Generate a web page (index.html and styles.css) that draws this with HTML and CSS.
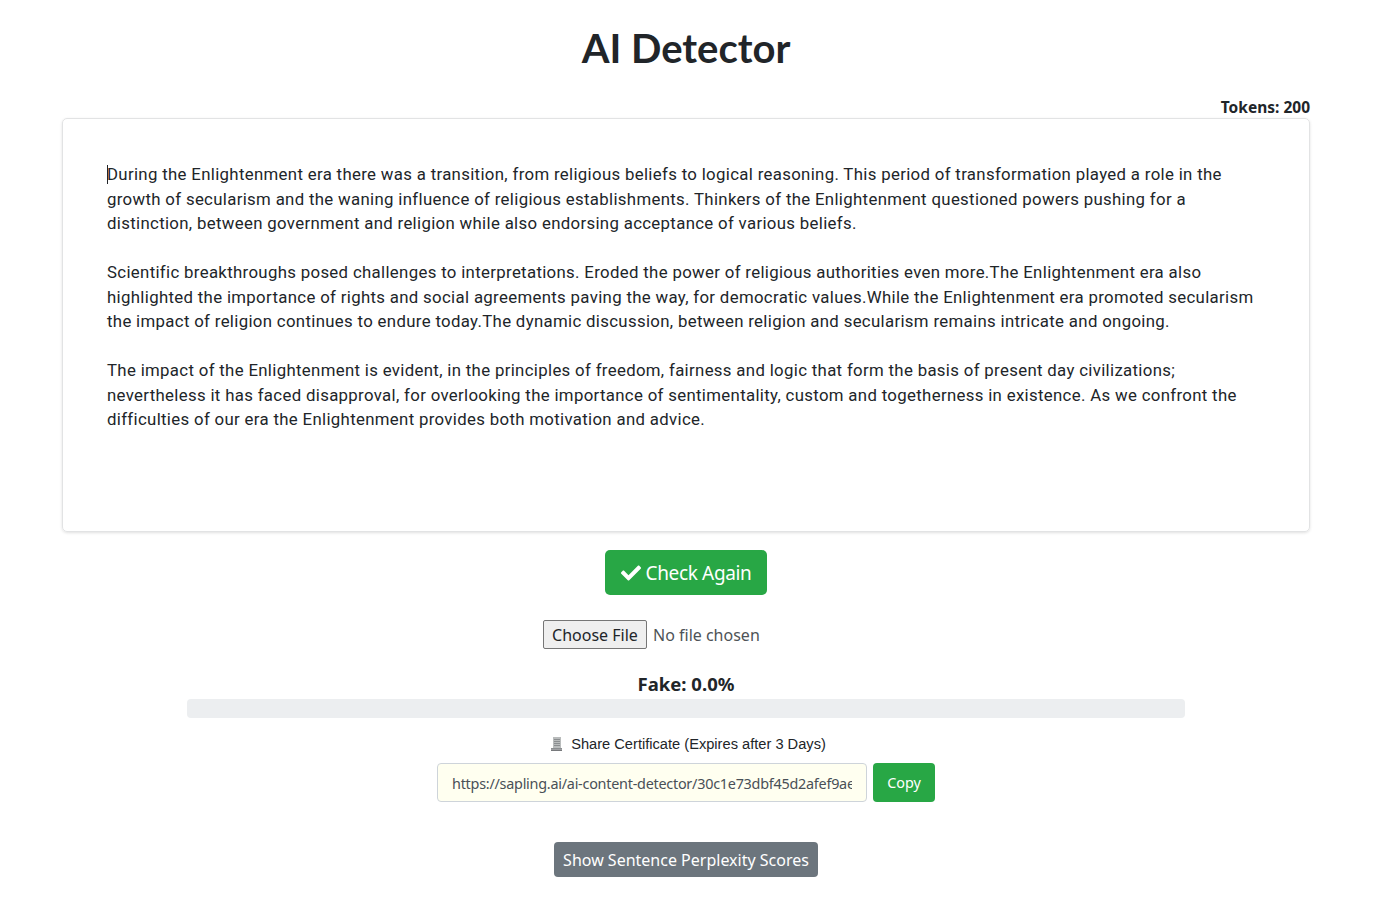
FILE: index.html
```html
<!DOCTYPE html>
<html lang="en">
<head>
    <meta charset="UTF-8">
    <meta name="viewport" content="width=device-width, initial-scale=1.0">
    <title>AI Detector</title>
    <link rel="stylesheet" href="styles.css">
</head>
<body>
    <div class="container">
        <h1 class="title">AI Detector</h1>
        <div class="tokens">Tokens: 200</div>
        <div class="editor">
            <p><span class="caret"></span>During the Enlightenment era there was a transition, from religious beliefs to logical reasoning. This period of transformation played a role in the growth of secularism and the waning influence of religious establishments. Thinkers of the Enlightenment questioned powers pushing for a distinction, between government and religion while also endorsing acceptance of various beliefs.</p>
            <p>Scientific breakthroughs posed challenges to interpretations. Eroded the power of religious authorities even more.The Enlightenment era also highlighted the importance of rights and social agreements paving the way, for democratic values.While the Enlightenment era promoted secularism the impact of religion continues to endure today.The dynamic discussion, between religion and secularism remains intricate and ongoing.</p>
            <p>The impact of the Enlightenment is evident, in the principles of freedom, fairness and logic that form the basis of present day civilizations; nevertheless it has faced disapproval, for overlooking the importance of sentimentality, custom and togetherness in existence. As we confront the difficulties of our era the Enlightenment provides both motivation and advice.</p>
        </div>
        <button class="btn btn-check" type="button">
            <svg class="check-icon" viewBox="0 0 512 512"><path fill="currentColor" d="M173.9 439.4L7.5 273c-10-10-10-26.200 0-36.200l36.200-36.200c10-10 26.200-10 36.200 0L192 312.700 432.100 72.600c10-10 26.200-10 36.200 0l36.200 36.200c10 10 10 26.200 0 36.200L210.100 439.400c-10 10-26.200 10-36.200 0z"/></svg>
            Check Again
        </button>
        <div class="file-row"><input type="file" class="file-input"></div>
        <div class="score-label">Fake: 0.0%</div>
        <div class="progress"></div>
        <div class="share-label">
            <svg class="receipt-icon" viewBox="0 0 12 14"><path fill="#b9bcbc" d="M2 0h8v11H2z"/><path fill="#8b8e90" d="M3 2h6v1H3zM3 4h6v1H3zM3 6h6v1H3zM3 8h6v1H3zM0 11h11v1.500H0z"/><path fill="#77797c" d="M0 12.500h11V14H0z"/></svg>
            <span>Share Certificate (Expires after 3 Days)</span>
        </div>
        <div class="share-row">
            <input type="text" class="share-input" readonly value="https://sapling.ai/ai-content-detector/30c1e73dbf45d2afef9ae81c7d2b64a0">
            <button class="btn btn-copy" type="button">Copy</button>
        </div>
        <button class="btn btn-scores" type="button">Show Sentence Perplexity Scores</button>
    </div>
</body>
</html>
```

FILE: styles.css
```css
body {
    margin: 0;
    padding: 0 7px 0 0;
    background: #fff;
    color: #212529;
    font-family: 'Open Sans', sans-serif;
}
.container {
    display: flex;
    flex-direction: column;
    align-items: center;
    padding: 0 62px;
}
.title {
    margin: 23px 0 0;
    font-family: 'Lato', sans-serif;
    font-size: 40px;
    line-height: 50px;
    font-weight: 700;
    color: #212529;
}
.tokens {
    align-self: flex-end;
    margin-top: 24px;
    font-size: 15.500px;
    line-height: 20px;
    font-weight: 700;
    font-family: 'Noto Sans', sans-serif;
}
.editor {
    box-sizing: border-box;
    width: 100%;
    height: 414px;
    margin-top: 1px;
    padding: 43px 44px;
    border: 1px solid #e2e3e4;
    border-radius: 5px;
    box-shadow: 0 1px 3px rgba(0, 0, 0, 0.12);
    font-family: 'Roboto', sans-serif;
    font-size: 16.800px;
    line-height: 24.500px;
    letter-spacing: 0.33px;
}
.editor p {
    margin: 0 0 24.500px;
}
.caret {
    display: inline-block;
    width: 1px;
    height: 19px;
    margin-right: -1px;
    background: #212529;
    vertical-align: -4px;
}
.btn {
    border: none;
    border-radius: 4px;
    color: #fff;
    font-family: 'Noto Sans', sans-serif;
}
.btn-check {
    display: flex;
    align-items: center;
    justify-content: center;
    gap: 5px;
    width: 162px;
    height: 45px;
    margin-top: 18px;
    padding: 0;
    border-radius: 5px;
    background: #28a745;
    font-size: 19px;
    letter-spacing: -0.350px;
}
.check-icon {
    width: 20px;
    height: 20px;
}
.file-row {
    margin-top: 25px;
    height: 29px;
}
.file-input {
    display: block;
    width: 286px;
    font-family: 'Noto Sans', sans-serif;
    font-size: 16px;
    line-height: 29px;
    color: #4e5357;
}
.file-input::file-selector-button {
    width: 104px;
    height: 29px;
    margin-right: 6px;
    padding: 0;
    border: 1px solid #767676;
    border-radius: 2px;
    background: #efefef;
    color: #212529;
    font-family: 'Noto Sans', sans-serif;
    font-size: 16px;
}
.score-label {
    margin-top: 21px;
    font-family: 'Noto Sans', sans-serif;
    font-size: 18.500px;
    line-height: 28px;
    font-weight: 700;
}
.progress {
    width: 998px;
    height: 19px;
    margin-top: 1px;
    border-radius: 4px;
    background: #eceef0;
}
.share-label {
    display: flex;
    align-items: center;
    gap: 8px;
    margin-top: 17px;
    padding-left: 5px;
    font-family: 'Liberation Sans', sans-serif;
    font-size: 14.650px;
    line-height: 18px;
}
.receipt-icon {
    width: 12px;
    height: 14px;
}
.share-row {
    display: flex;
    gap: 6px;
    margin-top: 10px;
}
.share-input {
    box-sizing: border-box;
    width: 430px;
    height: 39px;
    padding: 2px 14px 0;
    border: 1px solid #ced4da;
    border-radius: 4px;
    background: #fffff0;
    color: #495057;
    font-family: 'Noto Sans', sans-serif;
    font-size: 14.400px;
    letter-spacing: -0.250px;
}
.btn-copy {
    width: 62px;
    height: 39px;
    padding: 0;
    background: #28a745;
    font-size: 14.400px;
}
.btn-scores {
    width: 264px;
    height: 35px;
    margin-top: 40px;
    padding: 0;
    background: #6c757d;
    font-size: 16px;
}
```
